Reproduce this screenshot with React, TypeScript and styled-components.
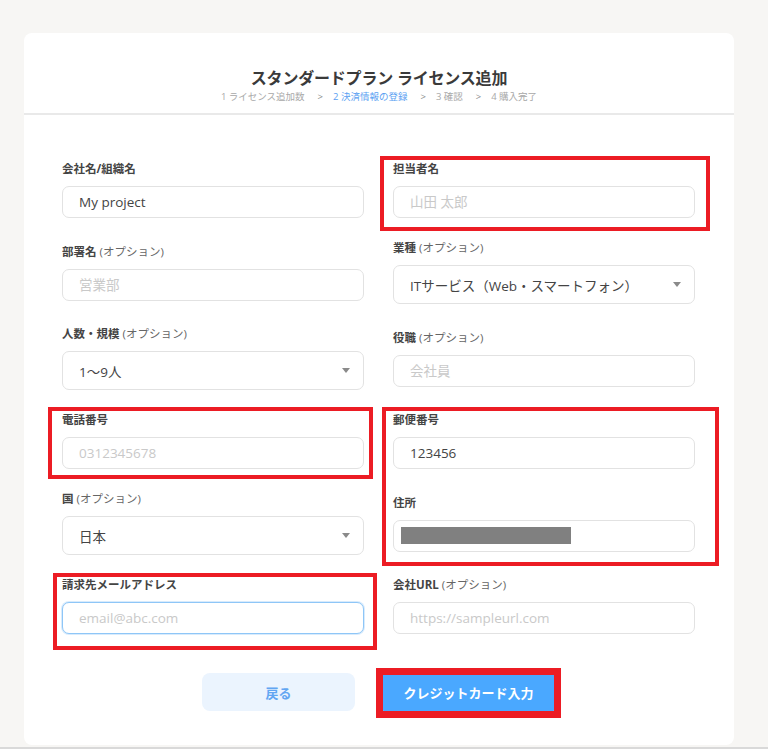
import React from 'react'
import styled, { createGlobalStyle, css } from 'styled-components'

const GlobalStyle = createGlobalStyle`
  html, body {
    margin: 0;
    padding: 0;
    background: #f7f6f4;
    font-family: "Open Sans", "Noto Sans CJK JP", sans-serif;
  }
  * { box-sizing: border-box; }
`

interface MarkBox { top: number; right: number; bottom: number; left: number; width?: number }

const markStyle = (m?: MarkBox) => m && css`
  position: relative;
  &::after {
    content: '';
    position: absolute;
    top: ${m.top}px;
    right: ${m.right}px;
    bottom: ${m.bottom}px;
    left: ${m.left}px;
    border: ${m.width || 4}px solid #ec1c24;
    pointer-events: none;
  }
`

const Page = styled.div`
  padding-top: 33px;
  min-height: 749px;
  display: flex;
  flex-direction: column;
`

const Card = styled.div`
  margin: 0 34px 0 24px;
  background: #fff;
  border-radius: 8px;
  height: 712px;
  display: flex;
  flex-direction: column;
`

const BottomBar = styled.div`
  margin-top: 2px;
  height: 4px;
  background: #d9d9d9;
`

const Header = styled.div`
  height: 82px;
  padding-top: 34px;
  border-bottom: 2px solid #e9e9e9;
  display: flex;
  flex-direction: column;
  align-items: center;
`

const Title = styled.h1`
  margin: 0;
  font-size: 16px;
  line-height: 22px;
  font-weight: 700;
  color: #3a3a3a;
  letter-spacing: -0.2px;
`

const Steps = styled.div`
  margin-top: 1px;
  display: flex;
  align-items: center;
  font-size: 9.5px;
  line-height: 14px;
  color: #a8a8a8;
`

const Step = styled.span<{ $active?: boolean }>`
  color: ${p => (p.$active ? '#5b9ff2' : '#a8a8a8')};
`

const Sep = styled.span`
  color: #8a8a8a;
  margin: 0 10px 0 13px;
`

const Form = styled.div`
  padding: 46px 38px 0 38px;
  display: grid;
  grid-template-columns: 302px 302px;
  column-gap: 29px;
  row-gap: 22px;
  align-items: center;
`

const Field = styled.div<{ $mark?: MarkBox }>`
  display: flex;
  flex-direction: column;
  ${p => markStyle(p.$mark)}
`

const Label = styled.label`
  font-size: 11.5px;
  line-height: 16px;
  font-weight: 700;
  color: #444;
  margin-bottom: 9px;
`

const Optional = styled.span`
  font-weight: 400;
  color: #666;
`

const controlBase = css`
  width: 100%;
  border: 1px solid #e2e2e2;
  border-radius: 7px;
  background: #fff;
  padding: 0 16px;
  font-family: "Open Sans", "Noto Sans CJK JP", sans-serif;
  font-size: 13.5px;
  color: #444;
  outline: none;
`

const Input = styled.input`
  ${controlBase}
  height: 32px;
  &::placeholder { color: #c9c9c9; }
  &:focus {
    border-color: #8ec6f7;
    box-shadow: 0 0 0 1px rgba(142, 198, 247, 0.35);
  }
`

const FakeInput = styled.div`
  ${controlBase}
  height: 32px;
  display: flex;
  align-items: center;
  padding-left: 7px;
`

const Redacted = styled.span`
  display: block;
  width: 170px;
  height: 17px;
  background: #808080;
`

const SelectBox = styled.div`
  ${controlBase}
  height: 39px;
  display: flex;
  align-items: center;
  justify-content: space-between;
  padding-right: 13px;
`

const Caret = styled.span`
  width: 0;
  height: 0;
  border-left: 4.5px solid transparent;
  border-right: 4.5px solid transparent;
  border-top: 5px solid #8a8a8a;
`

const Actions = styled.div`
  margin-top: 39px;
  display: flex;
  justify-content: center;
  gap: 26px;
`

const Button = styled.button<{ $primary?: boolean; $mark?: MarkBox }>`
  height: 38px;
  border: none;
  font-family: "Open Sans", "Noto Sans CJK JP", sans-serif;
  font-size: 13px;
  font-weight: 700;
  cursor: pointer;
  ${p => p.$primary
    ? css`
      width: 175px;
      background: #4aa8ff;
      color: #fff;
      border-radius: 3px;
    `
    : css`
      width: 153px;
      background: #ebf4fe;
      color: #62a6f2;
      border-radius: 8px;
    `}
  ${p => markStyle(p.$mark)}
`

const Select = ({ value }: { value: string }) => (
  <SelectBox>
    <span>{value}</span>
    <Caret />
  </SelectBox>
)

export default function App() {
  return (
    <>
      <GlobalStyle />
      <Page>
        <Card>
          <Header>
            <Title>スタンダードプラン ライセンス追加</Title>
            <Steps>
              <Step>1 ライセンス追加数</Step>
              <Sep>&gt;</Sep>
              <Step $active>2 決済情報の登録</Step>
              <Sep>&gt;</Sep>
              <Step>3 確認</Step>
              <Sep>&gt;</Sep>
              <Step>4 購入完了</Step>
            </Steps>
          </Header>

          <Form>
            <Field>
              <Label>会社名/組織名</Label>
              <Input defaultValue="My project" />
            </Field>
            <Field $mark={{ top: -5, right: -15, bottom: -13, left: -13 }}>
              <Label>担当者名</Label>
              <Input placeholder="山田 太郎" />
            </Field>

            <Field>
              <Label>部署名 <Optional>(オプション)</Optional></Label>
              <Input placeholder="営業部" />
            </Field>
            <Field>
              <Label>業種 <Optional>(オプション)</Optional></Label>
              <Select value="ITサービス（Web・スマートフォン）" />
            </Field>

            <Field>
              <Label>人数・規模 <Optional>(オプション)</Optional></Label>
              <Select value="1〜9人" />
            </Field>
            <Field>
              <Label>役職 <Optional>(オプション)</Optional></Label>
              <Input placeholder="会社員" />
            </Field>

            <Field $mark={{ top: -5, right: -9, bottom: -10, left: -14 }}>
              <Label>電話番号</Label>
              <Input placeholder="0312345678" />
            </Field>
            <Field $mark={{ top: -5, right: -24, bottom: -97, left: -11 }}>
              <Label>郵便番号</Label>
              <Input defaultValue="123456" />
            </Field>

            <Field>
              <Label>国 <Optional>(オプション)</Optional></Label>
              <Select value="日本" />
            </Field>
            <Field>
              <Label>住所</Label>
              <FakeInput>
                <Redacted />
              </FakeInput>
            </Field>

            <Field $mark={{ top: -4, right: -13, bottom: -16, left: -9 }}>
              <Label>請求先メールアドレス</Label>
              <Input placeholder="email@abc.com" autoFocus />
            </Field>
            <Field>
              <Label>会社URL <Optional>(オプション)</Optional></Label>
              <Input placeholder="https://sampleurl.com" />
            </Field>
          </Form>

          <Actions>
            <Button>戻る</Button>
            <Button $primary $mark={{ top: -5, right: -5, bottom: -7, left: -5, width: 7 }}>
              クレジットカード入力
            </Button>
          </Actions>
        </Card>
        <BottomBar />
      </Page>
    </>
  )
}
